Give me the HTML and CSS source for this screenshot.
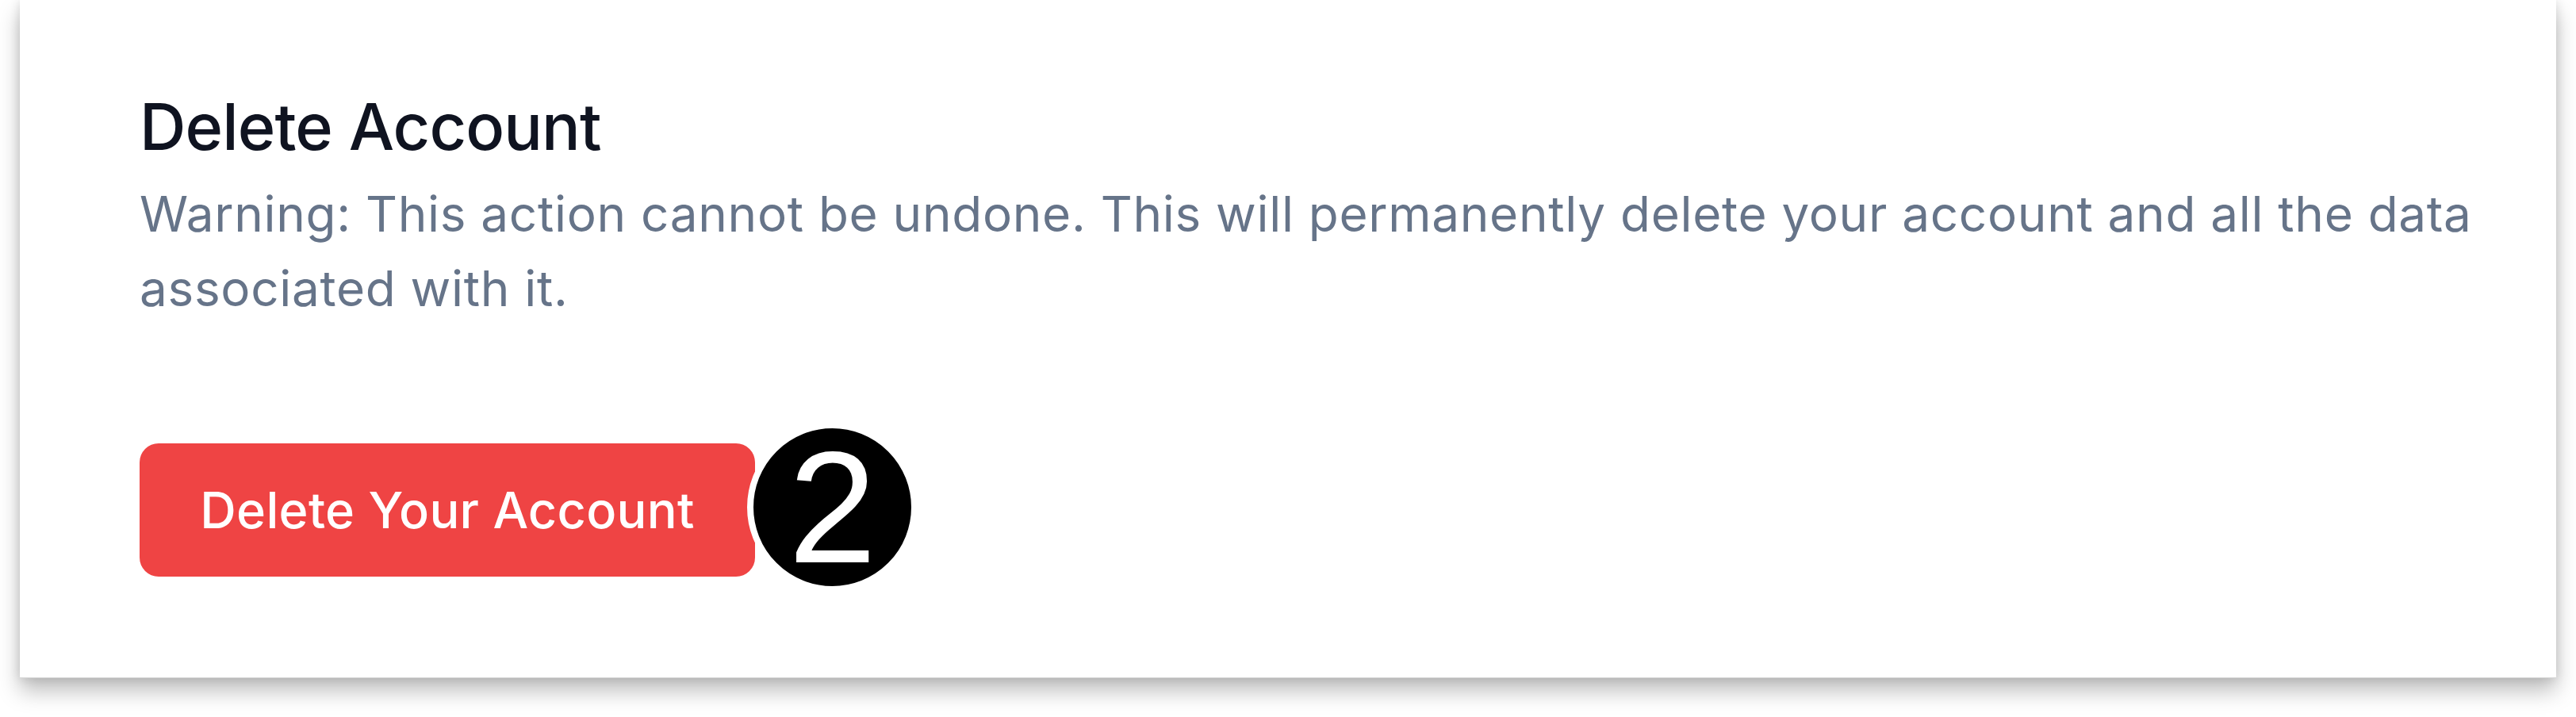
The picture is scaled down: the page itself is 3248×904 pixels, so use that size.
FILE: index.html
```html
<!DOCTYPE html>
<html lang="en">
<head>
<meta charset="utf-8">
<title>Delete Account</title>
<link rel="stylesheet" href="styles.css">
</head>
<body>
  <section class="card">
    <h2 class="card-title">Delete Account</h2>
    <p class="card-desc">Warning: This action cannot be undone. This will permanently delete your account and all the data associated with it.</p>
    <div class="actions">
      <div class="btn-wrap">
        <button class="btn-danger" type="button">Delete Your Account</button>
        <span class="step-badge">2</span>
      </div>
    </div>
  </section>
</body>
</html>
```
FILE: styles.css
```css
html, body {
  margin: 0;
  padding: 0;
  background: #ffffff;
}

body {
  font-family: Inter, "Noto Sans", "Liberation Sans", sans-serif;
  height: 904px;
  overflow: hidden;
}

.card {
  box-sizing: border-box;
  margin-left: 25px;
  width: 3198px;
  height: 855px;
  background: #ffffff;
  padding: 105px 60px 0 151px;
  box-shadow: 0 16px 26px rgba(0, 0, 0, 0.26), 0 0 12px rgba(0, 0, 0, 0.12);
  border-bottom: 1px solid #d6d6d6;
}

.card-title {
  margin: 0;
  font-size: 81px;
  line-height: 110px;
  font-weight: 500;
  letter-spacing: -0.9px;
  color: #0f1320;
}

.card-desc {
  margin: 8px 0 0 0;
  font-size: 62px;
  line-height: 94px;
  font-weight: 400;
  letter-spacing: 0.7px;
  color: #667489;
  max-width: 2980px;
}

.actions {
  margin-top: 148px;
  display: flex;
}

.btn-wrap {
  position: relative;
  display: inline-flex;
}

.btn-danger {
  font-family: Inter, "Noto Sans", "Liberation Sans", sans-serif;
  font-size: 63px;
  line-height: 94px;
  font-weight: 500;
  letter-spacing: 0.3px;
  color: #ffffff;
  background: #ef4444;
  border: none;
  border-radius: 24px;
  padding: 37px 0;
  width: 776px;
  text-align: center;
  white-space: nowrap;
}

.step-badge {
  position: absolute;
  left: 766px;
  top: -27px;
  width: 199px;
  height: 199px;
  border: 8px solid #ffffff;
  border-radius: 50%;
  background: #000000;
  color: #ffffff;
  font-family: "Liberation Sans", Arial, sans-serif;
  font-size: 200px;
  line-height: 199px;
  text-align: center;
}
```
